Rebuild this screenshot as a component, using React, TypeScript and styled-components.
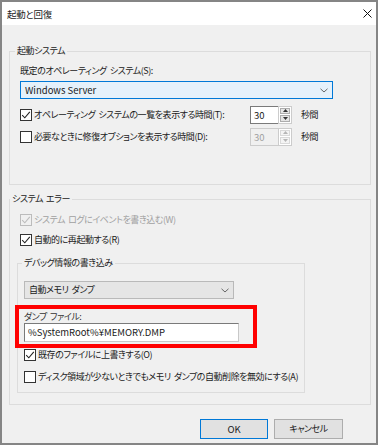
import React from 'react'
import styled, { createGlobalStyle } from 'styled-components'

const GlobalStyle = createGlobalStyle`
  html, body {
    margin: 0;
    padding: 0;
    background: #ffffff;
  }
  body {
    font-family: "Noto Sans CJK JP", "Noto Sans", sans-serif;
    font-size: 9px;
    letter-spacing: -0.45px;
    word-spacing: 1.5px;
    font-feature-settings: "palt";
    color: #1a1a1a;
  }
`

const Check = ({ checked, disabled }: { checked?: boolean; disabled?: boolean }) => (
  <Box $disabled={disabled}>
    {checked ? (
      <svg width="10" height="10" viewBox="0 0 10 10">
        <path d="M1.2 5.2 L3.8 7.8 L8.8 1.8" fill="none" stroke={disabled ? '#bcbcbc' : '#222'} strokeWidth="1.1" />
      </svg>
    ) : null}
  </Box>
)

const Chevron = () => (
  <svg width="8" height="5" viewBox="0 0 8 5">
    <path d="M0.5 0.8 L4 4 L7.5 0.8" fill="none" stroke="#666" strokeWidth="1" />
  </svg>
)

const Arrow = ({ up, disabled }: { up?: boolean; disabled?: boolean }) => (
  <svg width="5" height="3" viewBox="0 0 5 3">
    <path d={up ? 'M0 3 L2.5 0 L5 3 Z' : 'M0 0 L2.5 3 L5 0 Z'} fill={disabled ? '#b5b5b5' : '#333'} />
  </svg>
)

const Spinner = ({ disabled }: { disabled?: boolean }) => (
  <Spin>
    <SpinText $disabled={disabled}>30</SpinText>
    <SpinButtons>
      <SpinBtn $disabled={disabled}><Arrow up disabled={disabled} /></SpinBtn>
      <SpinBtn $disabled={disabled}><Arrow disabled={disabled} /></SpinBtn>
    </SpinButtons>
  </Spin>
)

const App = () => {
  return (
    <>
      <GlobalStyle />
      <Dialog>
        <TitleBar>
          <Title>起動と回復</Title>
          <svg width="9" height="9" viewBox="0 0 9 9">
            <path d="M0.5 0.5 L8.5 8.5 M8.5 0.5 L0.5 8.5" stroke="#111" strokeWidth="1" />
          </svg>
        </TitleBar>
        <Body>
          <Group $pad="6px 10px 38px 10px">
            <Legend $shift={-5}>起動システム</Legend>
            <Label>既定のオペレーティング システム(S):</Label>
            <Combo $active $width={313}>
              <Latin>Windows Server</Latin>
              <Chevron />
            </Combo>
            <SpinRow $top={6}>
              <CheckLabel>
                <Check checked />
                <span>オペレーティング システムの一覧を表示する時間(T):</span>
              </CheckLabel>
              <Spinner />
              <Unit>秒間</Unit>
            </SpinRow>
            <SpinRow $top={3}>
              <CheckLabel>
                <Check />
                <span>必要なときに修復オプションを表示する時間(D):</span>
              </CheckLabel>
              <Spinner disabled />
              <Unit>秒間</Unit>
            </SpinRow>
          </Group>

          <Group $pad="4px 12px 11px 7px" $top={7}>
            <Legend $shift={-7}>システム エラー</Legend>
            <CheckRow $indent={3} $disabled>
              <Check checked disabled />
              <span>システム ログにイベントを書き込む(W)</span>
            </CheckRow>
            <CheckRow $indent={3}>
              <Check checked />
              <span>自動的に再起動する(R)</span>
            </CheckRow>

            <Group $pad="8px 6px 5px 6px" $top={6}>
              <Legend $shift={-2}>デバッグ情報の書き込み</Legend>
              <Combo $width={210}>
                <span>自動メモリ ダンプ</span>
                <Chevron />
              </Combo>
              <DumpField>
                <SmallLabel>ダンプ ファイル:</SmallLabel>
                <TextInput>%SystemRoot%¥MEMORY.DMP</TextInput>
              </DumpField>
              <CheckRow $top={1}>
                <Check checked />
                <span>既存のファイルに上書きする(O)</span>
              </CheckRow>
              <CheckRow $top={2}>
                <Check />
                <span>ディスク領域が少ないときでもメモリ ダンプの自動削除を無効にする(A)</span>
              </CheckRow>
            </Group>
          </Group>

          <Buttons>
            <Button $primary><Latin>OK</Latin></Button>
            <Button>キャンセル</Button>
          </Buttons>
        </Body>
      </Dialog>
    </>
  )
}

export default App

const Dialog = styled.div`
  width: 378px;
  height: 445px;
  box-sizing: border-box;
  border: 2px solid #858585;
  background: #f0f0f0;
  display: flex;
  flex-direction: column;
`

const TitleBar = styled.div`
  height: 23px;
  flex-shrink: 0;
  background: #ffffff;
  display: flex;
  align-items: center;
  justify-content: space-between;
  padding: 0 4px 0 5px;
`

const Title = styled.span`
  font-size: 9.5px;
  letter-spacing: -0.3px;
  line-height: 14px;
`

const Latin = styled.span`
  font-size: 9.5px;
  letter-spacing: 0;
  word-spacing: 0;
`

const Body = styled.div`
  display: flex;
  flex-direction: column;
  padding: 19px 5px 0 7px;
`

const Group = styled.fieldset<{ $pad: string; $top?: number }>`
  margin: ${p => p.$top || 0}px 0 0 0;
  padding: ${p => p.$pad};
  border: 1px solid #dcdcdc;
  min-width: 0;
  display: flex;
  flex-direction: column;
  align-items: flex-start;
`

const Legend = styled.legend<{ $shift: number }>`
  padding: 0 2px;
  margin-left: ${p => p.$shift}px;
  line-height: 14px;
  height: 14px;
`

const Label = styled.div`
  line-height: 14px;
  height: 14px;
`

const SmallLabel = styled.div`
  line-height: 12px;
  height: 12px;
  color: #333;
`

const Combo = styled.div<{ $active?: boolean; $width: number }>`
  margin-top: 3px;
  width: ${p => p.$width}px;
  height: 18px;
  box-sizing: border-box;
  display: flex;
  align-items: center;
  justify-content: space-between;
  padding: 0 4px 0 4px;
  background: ${p => (p.$active ? '#e5f1fb' : '#e5e5e5')};
  border: 1px solid ${p => (p.$active ? '#0078d7' : '#b9b9b9')};
  line-height: 14px;
`

const SpinRow = styled.div<{ $top: number }>`
  margin-top: ${p => p.$top}px;
  height: 19px;
  display: flex;
  align-items: center;
`

const CheckLabel = styled.div`
  flex: 0 0 230px;
  display: flex;
  align-items: center;
  gap: 2px;
  line-height: 14px;
`

const CheckRow = styled.div<{ $indent?: number; $top?: number; $disabled?: boolean }>`
  margin: ${p => p.$top || 0}px 0 0 ${p => p.$indent || 0}px;
  height: 20px;
  display: flex;
  align-items: center;
  gap: 2px;
  line-height: 14px;
  color: ${p => (p.$disabled ? '#a0a0a0' : '#1a1a1a')};
`

const Box = styled.span<{ $disabled?: boolean }>`
  width: 12px;
  height: 12px;
  box-sizing: border-box;
  flex-shrink: 0;
  border: 1px solid ${p => (p.$disabled ? '#bcbcbc' : '#333333')};
  background: ${p => (p.$disabled ? '#f0f0f0' : '#ffffff')};
  display: flex;
  align-items: center;
  justify-content: center;
`

const Spin = styled.div`
  display: flex;
  height: 18px;
`

const SpinText = styled.div<{ $disabled?: boolean }>`
  width: 28px;
  box-sizing: border-box;
  border: 1px solid ${p => (p.$disabled ? '#cccccc' : '#7a7a7a')};
  border-right: none;
  background: ${p => (p.$disabled ? '#f0f0f0' : '#ffffff')};
  color: ${p => (p.$disabled ? '#a0a0a0' : '#1a1a1a')};
  padding-left: 3px;
  font-size: 9.5px;
  letter-spacing: 0;
  line-height: 16px;
`

const SpinButtons = styled.div`
  width: 14px;
  display: flex;
  flex-direction: column;
  gap: 1px;
  padding: 1px;
  box-sizing: border-box;
  border: 1px solid #cccccc;
  background: #ffffff;
`

const SpinBtn = styled.div<{ $disabled?: boolean }>`
  flex: 1;
  box-sizing: border-box;
  border: 1px solid ${p => (p.$disabled ? '#d9d9d9' : '#adadad')};
  background: ${p => (p.$disabled ? '#f4f4f4' : '#e5e5e5')};
  display: flex;
  align-items: center;
  justify-content: center;
`

const Unit = styled.span`
  margin-left: 9px;
  line-height: 14px;
`

const DumpField = styled.div`
  margin: 10px 0 0 -5px;
  padding: 2px 14px 2px 5px;
  outline: 4px solid #ff0000;
  display: flex;
  flex-direction: column;
`

const TextInput = styled.div`
  width: 215px;
  height: 19px;
  box-sizing: border-box;
  border: 1px solid #7a7a7a;
  border-right-color: #c8c8c8;
  border-bottom-color: #c8c8c8;
  background: #ffffff;
  padding-left: 3px;
  font-size: 9.5px;
  letter-spacing: 0;
  line-height: 17px;
`

const Buttons = styled.div`
  margin-top: 14px;
  padding-right: 28px;
  display: flex;
  justify-content: flex-end;
  gap: 6px;
`

const Button = styled.div<{ $primary?: boolean }>`
  width: ${p => (p.$primary ? 68 : 69)}px;
  height: 20px;
  box-sizing: border-box;
  background: #e1e1e1;
  border: 1px solid ${p => (p.$primary ? '#0078d7' : '#adadad')};
  display: flex;
  align-items: center;
  justify-content: center;
  line-height: 14px;
`
